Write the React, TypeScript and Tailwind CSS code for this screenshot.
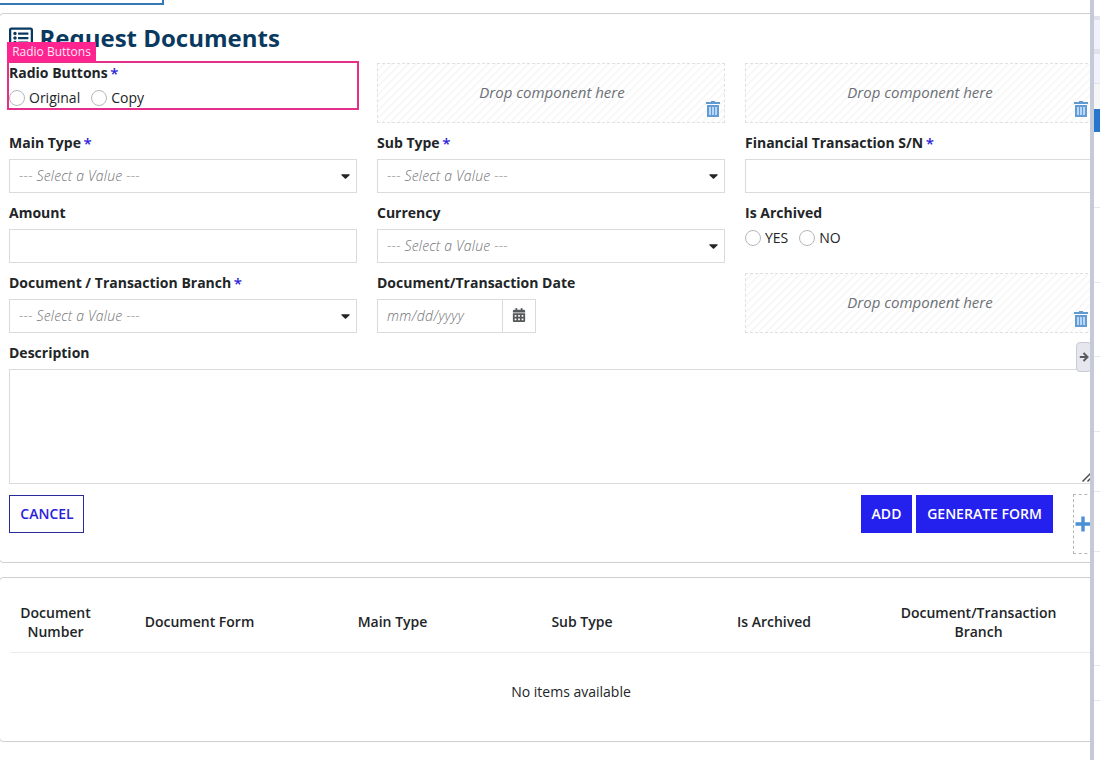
import { ReactNode } from "react";
import { FaCalendarAlt, FaCaretDown, FaRegListAlt } from "react-icons/fa";

type FieldProps = {
  label: string;
  required?: boolean;
  children: ReactNode;
};

function Field({ label, required, children }: FieldProps) {
  return (
    <div className="h-[60px]">
      <FieldLabel label={label} required={required} />
      {children}
    </div>
  );
}

function FieldLabel({ label, required }: { label: string; required?: boolean }) {
  return (
    <div className="mb-1.5 flex h-5 items-center gap-[2.5px] whitespace-nowrap font-bold">
      {label}
      {required && <span className="text-[15px] font-semibold leading-5 text-[#2a22d8]">*</span>}
    </div>
  );
}

function Select() {
  return (
    <div className="flex h-[34px] items-center justify-between border border-[#d9dbdd] pl-[9px] pr-1.5">
      <span className="font-light italic tracking-[0.19px] text-[#6f7375]">--- Select a Value ---</span>
      <FaCaretDown className="h-3.5 w-[9px]" preserveAspectRatio="none" />
    </div>
  );
}

function TextInput() {
  return <div className="h-[34px] border border-[#d9dbdd]" />;
}

function RadioGroup({ options }: { options: string[] }) {
  return (
    <div className="-mt-[5px] flex h-7 items-center gap-[11px]">
      {options.map((option) => (
        <div key={option} className="flex items-center gap-1">
          <span className="size-4 rounded-full border border-[#b5b7b9]" />
          {option}
        </div>
      ))}
    </div>
  );
}

function TrashIcon() {
  return (
    <svg viewBox="0 0 14 16" className="h-4 w-3.5">
      <path d="M5 0h4v1h5v2H0V1h5z" fill="#5f9bd0" />
      <path d="M1 4h12v12H1z" fill="#659bd0" />
      <path d="M3 6h2v8H3zM6 6h2v8H6zM9 6h2v8H9z" fill="#b5d8ff" />
    </svg>
  );
}

function DropZone() {
  return (
    <div className="relative flex h-[60px] items-center justify-center border border-dashed border-[#dfe0e2] bg-[repeating-linear-gradient(135deg,#fff_0px,#fff_3.4px,#f7f7f8_3.8px,#f7f7f8_5.3px,#fff_5.66px)] pl-0.5 text-[15px] italic text-[#6c7075]">
      Drop component here
      <div className="absolute bottom-[5px] right-1">
        <TrashIcon />
      </div>
    </div>
  );
}

const columns = [
  { name: "Document Number", width: "w-[92px]" },
  { name: "Document Form", width: "w-[195px]" },
  { name: "Main Type", width: "w-[191px]" },
  { name: "Sub Type", width: "w-[188px]" },
  { name: "Is Archived", width: "w-[196px]" },
  { name: "Document/Transaction Branch", width: "w-[213px]" },
];

function RequestForm() {
  return (
    <section className="h-[550px] rounded border border-[#cdd0d2] pl-[9px] pr-[9px] pt-2">
      <h1 className="flex h-8 items-center gap-[6.5px] text-2xl font-bold text-[#0a3960]">
        <FaRegListAlt className="size-6" />
        Request Documents
      </h1>

      <div className="mt-[9px] grid grid-cols-[348px_348px_348px] gap-x-5 gap-y-2.5">
        <div className="relative h-[60px]">
          <FieldLabel label="Radio Buttons" required />
          <RadioGroup options={["Original", "Copy"]} />
          <div className="absolute -left-0.5 -top-0.5 h-[49px] w-[352px] border-2 border-[#e5308a]" />
          <div className="absolute -left-0.5 -top-[21px] flex h-5 w-[89px] items-center justify-center whitespace-nowrap bg-[#ff2490] text-xs text-[#ffe6f4]">
            Radio Buttons
          </div>
        </div>
        <DropZone />
        <DropZone />

        <Field label="Main Type" required>
          <Select />
        </Field>
        <Field label="Sub Type" required>
          <Select />
        </Field>
        <Field label="Financial Transaction S/N" required>
          <TextInput />
        </Field>

        <Field label="Amount">
          <TextInput />
        </Field>
        <Field label="Currency">
          <Select />
        </Field>
        <Field label="Is Archived">
          <RadioGroup options={["YES", "NO"]} />
        </Field>

        <Field label="Document / Transaction Branch" required>
          <Select />
        </Field>
        <Field label="Document/Transaction Date">
          <div className="flex h-[34px] w-[159px] border border-[#d9dbdd]">
            <div className="flex w-[124px] items-center pl-[9px] font-light italic tracking-[0.4px] text-[#6f7375]">
              mm/dd/yyyy
            </div>
            <div className="flex flex-1 items-start justify-center border-l border-[#d9dbdd] pr-px pt-2">
              <FaCalendarAlt className="size-3.5 text-[#55585a]" />
            </div>
          </div>
        </Field>
        <DropZone />
      </div>

      <div className="mt-2.5">
        <FieldLabel label="Description" />
        <div className="flex h-[115px] items-end justify-end border border-[#d9dbdd] pb-[1.5px]">
          <svg viewBox="0 0 10 10" className="size-2.5" stroke="#4a4a4a" strokeWidth="1.5">
            <path d="M0.5 9.5l9-9M5.5 9.5l4-4" />
          </svg>
        </div>
      </div>

      <div className="mt-2.5 flex justify-between">
        <div className="mt-px flex h-[38px] w-[75px] items-center justify-center border border-[#2b2a9b] pl-px font-semibold text-[#2a22d8]">
          CANCEL
        </div>
        <div className="flex gap-1 font-semibold text-white">
          <div className="mt-px flex h-[38px] w-[51px] items-center justify-center bg-[#2420ee]">ADD</div>
          <div className="mt-px flex h-[38px] w-[137px] items-center justify-center bg-[#2420ee]">GENERATE FORM</div>
          <div className="ml-4 flex h-[60px] w-5 items-center justify-center border border-dashed border-[#b3b5b7]">
            <svg viewBox="0 0 16 16" className="size-4 shrink-0" stroke="#4b90d4" strokeWidth="3.4">
              <path d="M8 0.5v15M0.5 8h15" />
            </svg>
          </div>
        </div>
      </div>
    </section>
  );
}

function DocumentsTable() {
  return (
    <section className="mt-3.5 h-[165px] rounded border border-[#cdd0d2] pl-[9px] pt-[18px]">
      <div className="ml-px flex h-[57px] items-center border-b border-[#ececee] pb-[5px] text-center font-semibold leading-[19px]">
        {columns.map((column) => (
          <div key={column.name} className={`${column.width} shrink-0 px-2 first:pl-[7px]`}>
            {column.name}
          </div>
        ))}
      </div>
      <div className="flex h-[77px] w-[1124px] items-center justify-center">No items available</div>
    </section>
  );
}

// Only the left edge of the properties panel is in view
function PropertiesPanel() {
  return (
    <aside className="flex w-1.5 flex-col bg-white">
      <div className="h-4" />
      <div className="h-[38px] border-b-[5px] border-t-4 border-[#e1e1ea] bg-[#f2f2ff]" />
      <div className="h-[30px] border-b border-[#e1e1ea] bg-[#f2f2ff]" />
      <div className="h-[25px] bg-[#f6f6f6]" />
      <div className="h-[23px] bg-[#2677cb]" />
      <div className="h-[76px] border-b border-[#e8e8ec]" />
      <div className="h-[75px] border-b border-[#e8e8ec]" />
      <div className="h-[74px] border-b border-[#e8e8ec]" />
      <div className="h-[75px] border-b border-[#e8e8ec]" />
      <div className="h-[60px] border-b border-[#e8e8ec]" />
      <div className="h-[60px] border-b border-[#e8e8ec]" />
      <div className="h-[114px] border-b border-[#e8e8ec]" />
      <div className="h-[35px] border-b border-[#e8e8ec]" />
    </aside>
  );
}

export default function App() {
  return (
    <div className="flex h-[760px] w-[1100px] overflow-hidden bg-white font-['Open_Sans',sans-serif] text-sm text-[#222527]">
      <main className="relative w-[1090px] shrink-0 overflow-hidden">
        <div className="h-[5px] w-[164px] border-b-2 border-r-2 border-[#3478b5]" />
        <div className="-ml-px mt-2 w-[1104px]">
          <RequestForm />
          <DocumentsTable />
        </div>
        <div className="absolute -right-0.5 top-[342px] flex h-[30px] w-4 items-center justify-center rounded-sm border border-[#c9cad5] bg-[#e6e6ee]">
          <svg viewBox="0 0 10 10" className="size-2.5" fill="none" stroke="#595b60" strokeWidth="2">
            <path d="M0.8 5h7M4.5 1l4 4-4 4" />
          </svg>
        </div>
      </main>
      <div className="w-1 shrink-0 bg-[#c5cad8]" />
      <PropertiesPanel />
    </div>
  );
}
